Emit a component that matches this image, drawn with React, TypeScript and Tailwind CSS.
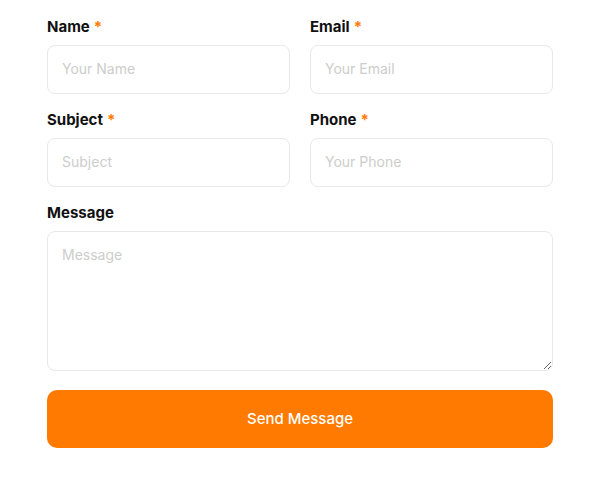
import React from "react";

function Field({ label, required, placeholder }: { label: string; required?: boolean; placeholder: string }) {
  return (
    <div className="flex flex-col">
      <label className="text-[15px] leading-[22px] font-bold text-[#111] mb-[7px]">
        {label}
        {required && <span className="text-[#ff7a00] ml-1">*</span>}
      </label>
      <input
        type="text"
        placeholder={placeholder}
        className="h-[49px] w-full rounded-lg border border-[#e8e8e8] bg-white px-[14px] pb-[2px] text-[14px] text-[#333] placeholder:text-[#cdcdcd] outline-none"
      />
    </div>
  );
}

export default function App() {
  return (
    <main className="min-h-screen w-full bg-white" style={{ fontFamily: "Inter, 'Liberation Sans', sans-serif" }}>
      <form className="mx-auto w-[506px] pt-4 flex flex-col">
        <div className="grid grid-cols-2 gap-x-5 gap-y-[15px]">
          <Field label="Name" required placeholder="Your Name" />
          <Field label="Email" required placeholder="Your Email" />
          <Field label="Subject" required placeholder="Subject" />
          <Field label="Phone" required placeholder="Your Phone" />
        </div>
        <div className="flex flex-col mt-[15px]">
          <label className="text-[15px] leading-[22px] font-bold text-[#111] mb-[7px]">Message</label>
          <textarea
            placeholder="Message"
            className="h-[140px] w-full rounded-lg border border-[#e8e8e8] bg-white px-[14px] py-[12px] text-[14px] text-[#333] placeholder:text-[#cdcdcd] outline-none"
          />
        </div>
        <button
          type="button"
          className="mt-[19px] h-[58px] w-full rounded-[10px] bg-[#ff7a00] text-[15px] font-medium text-white"
        >
          Send Message
        </button>
      </form>
    </main>
  );
}
